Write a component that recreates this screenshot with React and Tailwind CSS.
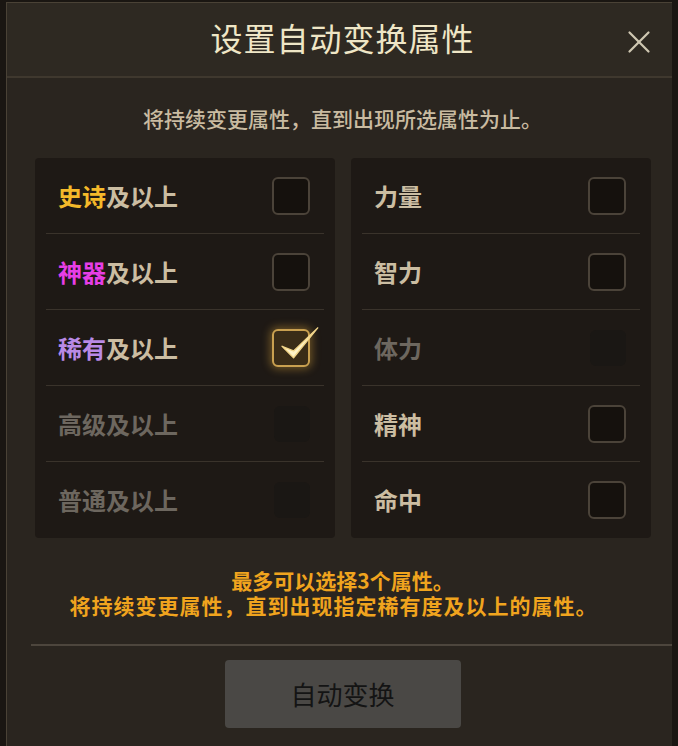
import { X } from 'lucide-react';

const font = { fontFamily: '"Noto Sans CJK SC", "Noto Sans", sans-serif' };

const rarities = [
  { hi: '史诗', hiClass: 'text-[#f4b92a]', state: 'off' },
  { hi: '神器', hiClass: 'text-[#e63ee6]', state: 'off' },
  { hi: '稀有', hiClass: 'text-[#b98ae6]', state: 'on' },
  { hi: '高级', hiClass: 'text-[#6d675f]', state: 'disabled' },
  { hi: '普通', hiClass: 'text-[#6d675f]', state: 'disabled' },
];

const stats = [
  { name: '力量', state: 'off' },
  { name: '智力', state: 'off' },
  { name: '体力', state: 'disabled' },
  { name: '精神', state: 'off' },
  { name: '命中', state: 'off' },
];

const Checkbox = ({ state }) => {
  if (state === 'disabled') {
    return <div className="w-[36px] h-[36px] rounded-[6px] bg-[#1a1714]" />;
  }
  if (state === 'on') {
    return (
      <div className="relative w-[38px] h-[38px] rounded-[6px] border-2 border-[#c9a050] bg-[#3a2c17] shadow-[0_0_8px_2px_rgba(210,160,60,0.45)]">
        <svg viewBox="0 0 40 40" className="absolute -top-[10px] left-[0px] w-[46px] h-[46px]">
          <path d="M7 22 L17 32 L38 6 L17 26 Z" fill="#fff3c8" stroke="#f1d488" strokeWidth="1.2" strokeLinejoin="round" />
        </svg>
      </div>
    );
  }
  return <div className="w-[38px] h-[38px] rounded-[6px] border-2 border-[#4b4339] bg-[#15110d]" />;
};

const Row = ({ children, state, last }) => (
  <div className={`h-[76px] flex items-center justify-between pl-[12px] pr-[14px] ${last ? '' : 'border-b border-[#3a332b]'}`}>
    {children}
    <Checkbox state={state} />
  </div>
);

const App = () => {
  return (
    <div className="w-[678px] h-[746px] bg-[#1a1612] overflow-hidden" style={font}>
      <div className="ml-[6px] mt-[2px] w-[666px] h-[744px] bg-[#2a251f] border-l border-t border-[#4a4236] flex flex-col">
        {/* Header */}
        <div className="relative h-[75px] shrink-0 bg-[#2e2922] border-b-2 border-[#3f382e] flex items-center justify-center pb-[6px] pl-[6px]">
          <h1 className="text-[32px] text-[#efe6c6] tracking-[1px] leading-none">设置自动变换属性</h1>
          <X className="absolute right-[14px] top-[20px] text-[#cfc7b2]" size={38} strokeWidth={1.4} />
        </div>

        <p className="mt-[30px] text-center text-[21px] font-medium leading-none text-[#c9bba1] pl-[6px]">
          将持续变更属性，直到出现所选属性为止。
        </p>

        {/* Panels */}
        <div className="mt-[29px] ml-[28px] w-[616px] grid grid-cols-2 gap-[16px]">
          <div className="bg-[#1e1915] rounded-[4px] px-[11px]">
            {rarities.map((r, i) => (
              <Row key={r.hi} state={r.state} last={i === rarities.length - 1}>
                <span className="text-[24px] font-bold leading-none">
                  <span className={r.hiClass}>{r.hi}</span>
                  <span className={r.state === 'disabled' ? 'text-[#6d675f]' : 'text-[#cbbda2]'}>及以上</span>
                </span>
              </Row>
            ))}
          </div>
          <div className="bg-[#1e1915] rounded-[4px] px-[11px]">
            {stats.map((s, i) => (
              <Row key={s.name} state={s.state} last={i === stats.length - 1}>
                <span className={`text-[24px] font-bold leading-none ${s.state === 'disabled' ? 'text-[#6d675f]' : 'text-[#cbbda2]'}`}>
                  {s.name}
                </span>
              </Row>
            ))}
          </div>
        </div>

        {/* Notes */}
        <div className="mt-[30px] text-center text-[21px] font-semibold leading-[25px] text-[#f0a41e]">
          <p className="pl-[6px]">最多可以选择3个属性。</p>
          <p className="tracking-[1px] pr-[12px]">将持续变更属性，直到出现指定稀有度及以上的属性。</p>
        </div>

        <div className="mt-[26px] ml-[24px] h-[2px] shrink-0 bg-[#4d463d]" />

        <div className="mt-[14px] flex justify-center pl-[6px]">
          <button className="w-[236px] h-[68px] rounded-[4px] bg-[#4a4845] text-[26px] text-[#141414] leading-none">
            自动变换
          </button>
        </div>
      </div>
    </div>
  );
};

export default App;
